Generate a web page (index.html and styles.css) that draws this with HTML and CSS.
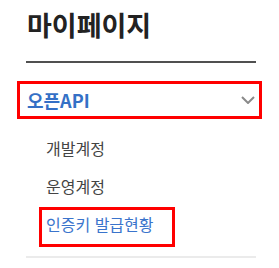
FILE: index.html
```html
<!DOCTYPE html>
<html lang="ko">
<head>
<meta charset="utf-8">
<link rel="stylesheet" href="styles.css">
</head>
<body>
<aside class="sidebar">
  <h2 class="title">마이페이지</h2>
  <nav class="menu">
    <div class="menu-head">
      <span class="menu-label">오픈API</span>
      <svg class="chevron" width="14" height="8" viewBox="0 0 14 8"><path d="M1 1 L7 7 L13 1" fill="none" stroke="#8a8a8a" stroke-width="2"/></svg>
    </div>
    <ul class="sub">
      <li class="sub-item">개발계정</li>
      <li class="sub-item">운영계정</li>
      <li class="sub-item active"><span class="mark">인증키 발급현황</span></li>
    </ul>
  </nav>
</aside>
</body>
</html>
```
FILE: styles.css
```css
html, body { margin: 0; padding: 0; background: #fff; }
body { font-family: "Noto Sans CJK KR", "Noto Sans", sans-serif; }
.sidebar { width: 230px; padding: 0 0 0 26px; }
.title {
  margin: 0;
  padding-top: 6px;
  height: 63px;
  box-sizing: border-box;
  font-size: 27px;
  line-height: 37px;
  font-weight: 700;
  color: #222;
  padding-left: 1px;
  border-bottom: 2px solid #505050;
}
.menu { border-bottom: 2px solid #ebebeb; padding-bottom: 13px; }
.menu-head {
  position: relative;
  margin-top: 18px;
  height: 38px;
  display: flex;
  align-items: center;
  justify-content: space-between;
}
.menu-head::after {
  content: "";
  position: absolute;
  left: -9px; right: -6px; top: 0; bottom: 0;
  border: 3px solid #f00;
}
.menu-label { font-size: 18px; font-weight: 700; color: #3470c6; padding-left: 1px; }
.chevron { margin-right: 1px; }
.sub { list-style: none; margin: 10px 0 0; padding: 0 0 0 20px; }
.sub-item { height: 38px; line-height: 38px; font-size: 16px; color: #444; }
.sub-item.active { color: #3a74cc; }
.mark { position: relative; display: inline-block; }
.mark::after {
  content: "";
  position: absolute;
  left: -7px; right: -21px; top: 2px; bottom: -4px;
  border: 3px solid #f00;
}
```
